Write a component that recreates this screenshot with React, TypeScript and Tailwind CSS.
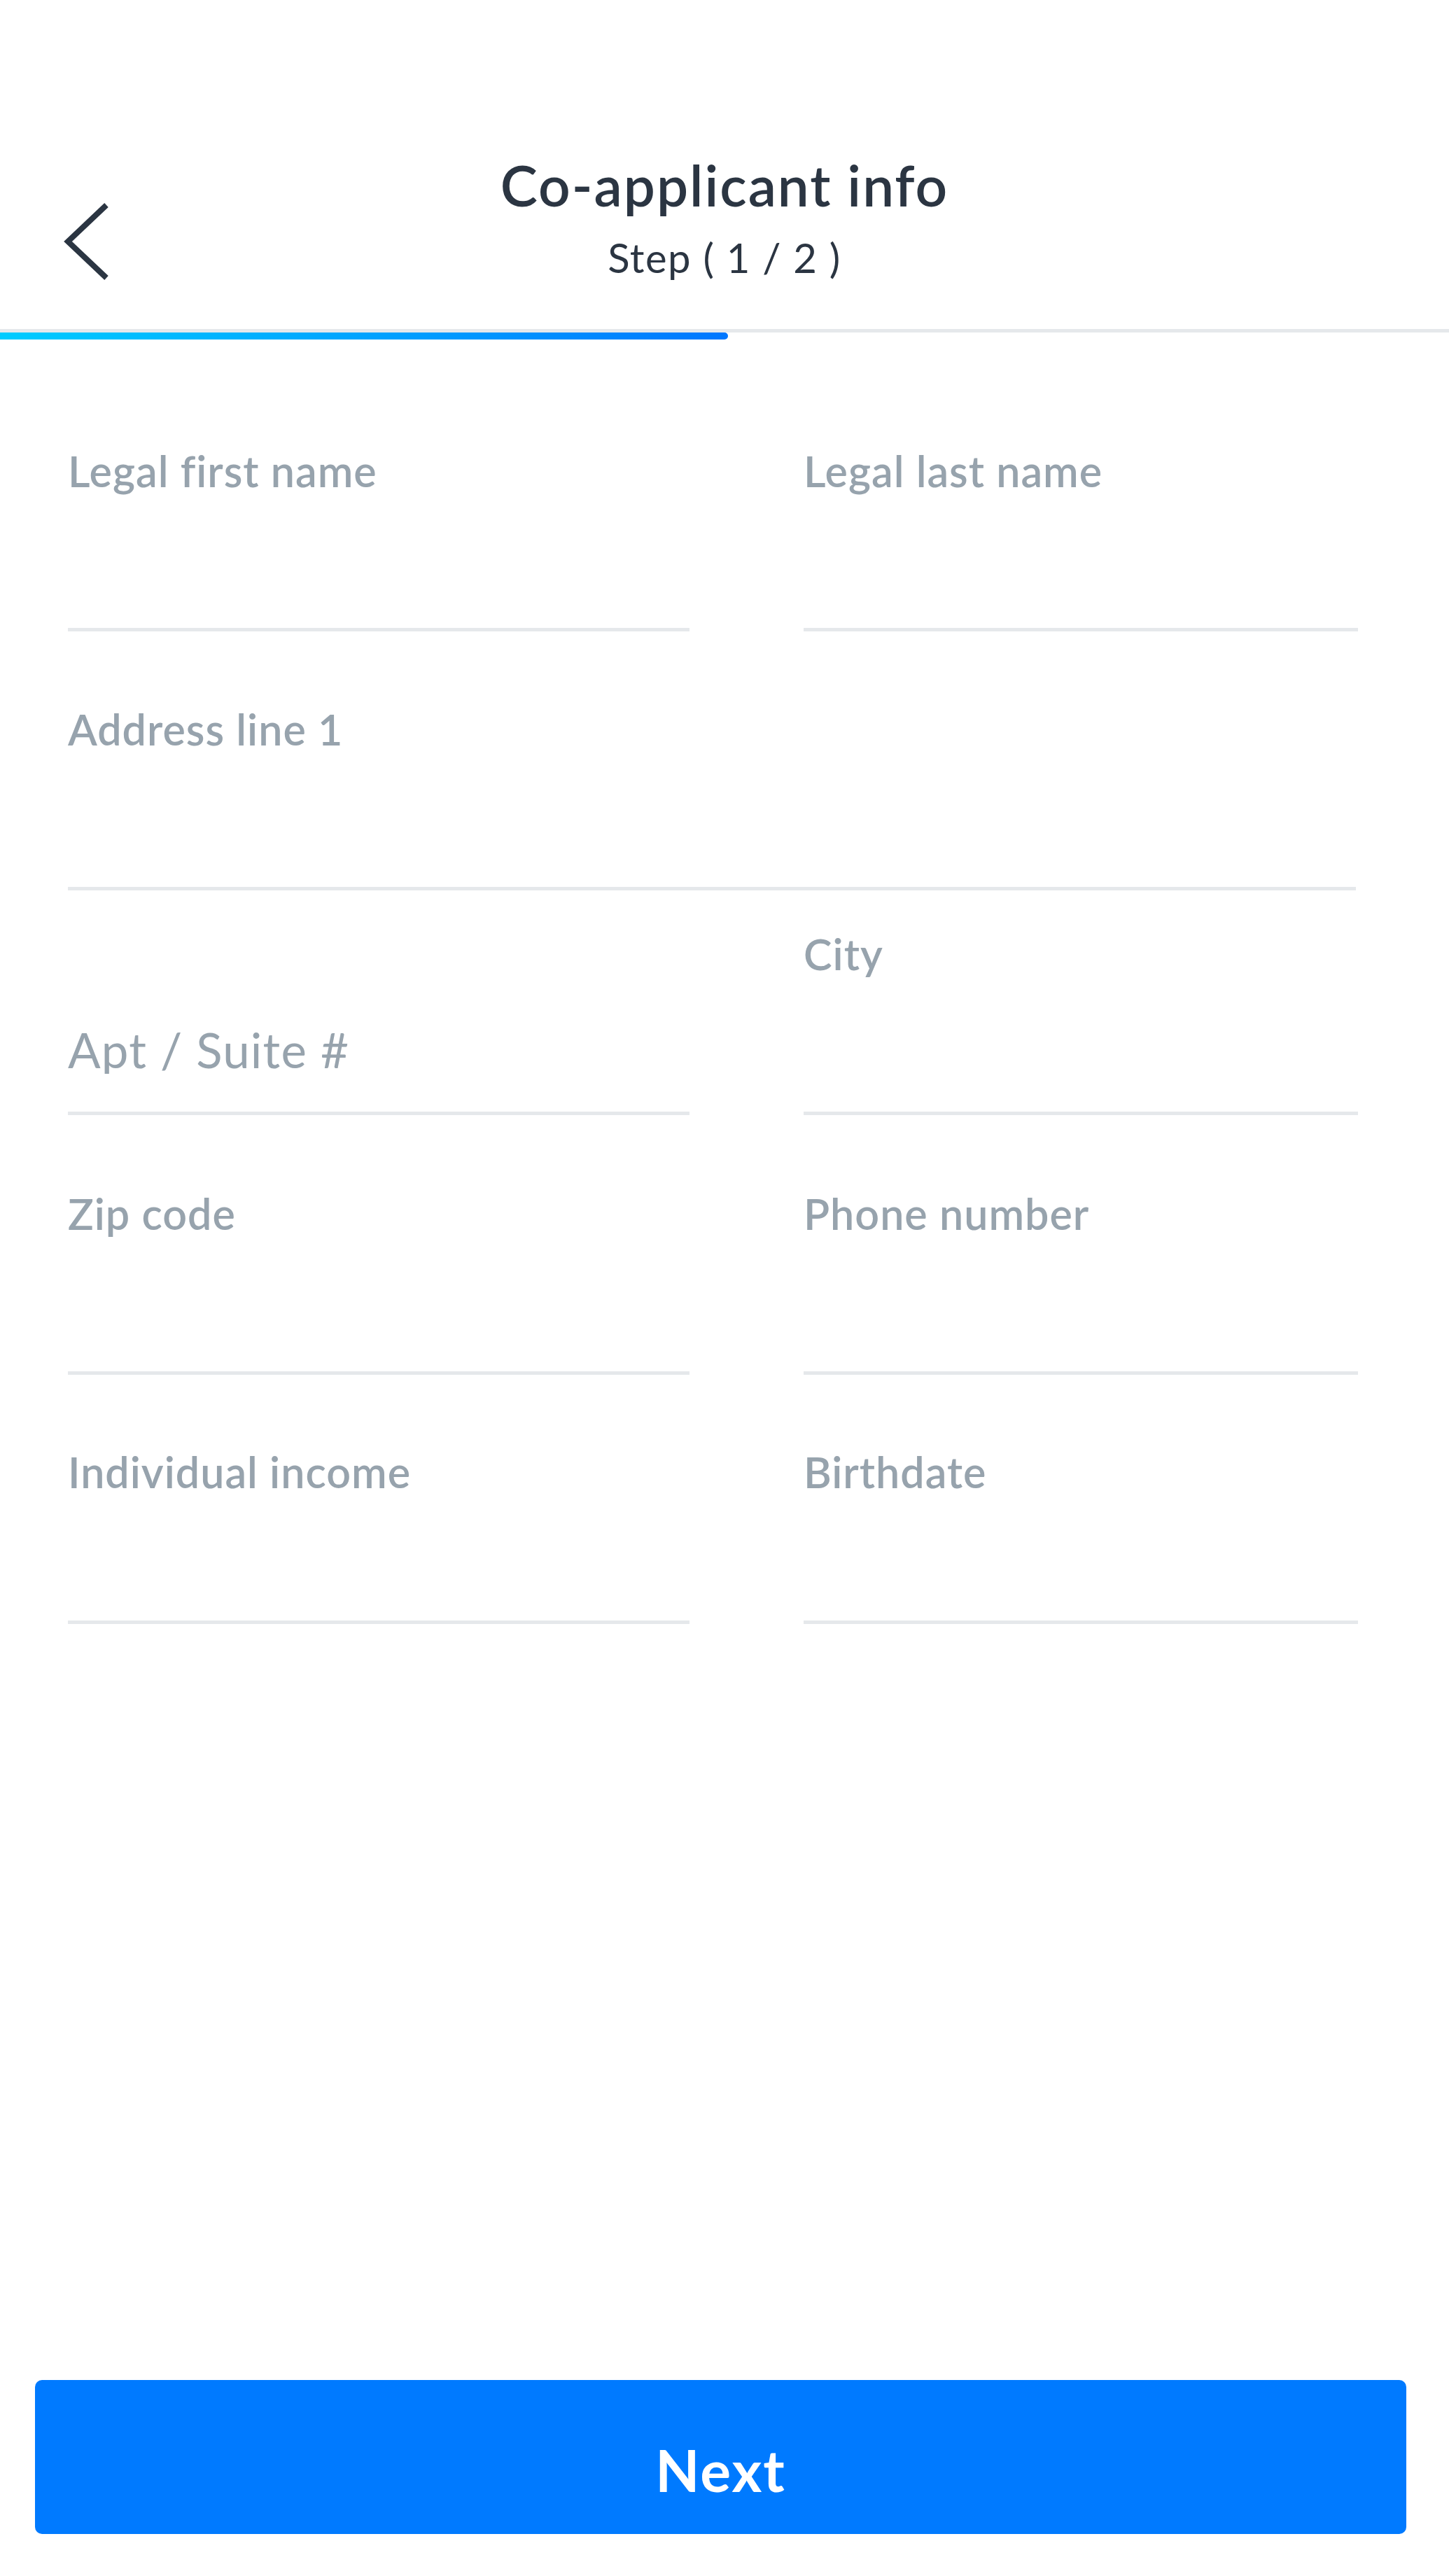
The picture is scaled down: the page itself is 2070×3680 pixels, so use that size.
import { ChangeEvent, useState } from 'react'

const LABEL = 'text-[61px] leading-none font-semibold tracking-[1px] text-[#97a3ad]'
const LINE = 'border-b-[5px] border-[#e5e8eb]'

type FieldProps = {
  label: string
  value: string
  onChange: (e: ChangeEvent<HTMLInputElement>) => void
  inner?: string
}

function Field({ label, value, onChange, inner = 'h-[194px]' }: FieldProps) {
  return (
    <div className={LINE}>
      <label className={`block ${LABEL}`}>{label}</label>
      <div className={`${inner} flex items-end pb-[40px]`}>
        <input
          type="text"
          value={value}
          onChange={onChange}
          className="w-full bg-transparent outline-none text-[61px] leading-none text-[#2b3542]"
        />
      </div>
    </div>
  )
}

export default function App() {
  const [form, setForm] = useState({
    firstName: '',
    lastName: '',
    address1: '',
    apt: '',
    city: '',
    zip: '',
    phone: '',
    income: '',
    birthdate: ''
  })

  const set = (key: keyof typeof form) => (e: ChangeEvent<HTMLInputElement>) =>
    setForm({ ...form, [key]: e.target.value })

  return (
    <div className="w-[2070px] h-[3680px] bg-white flex flex-col font-['Lato','Noto_Sans',sans-serif]">
      <header className="h-[470px] grid grid-cols-[1fr_auto_1fr]">
        <div className="pl-[80px] pt-[280px]">
          <button className="block" aria-label="Back">
            <svg width="90" height="130" viewBox="0 0 90 130" fill="none">
              <path d="M72 13 L17 65 L72 117" stroke="#2b3542" strokeWidth="8" />
            </svg>
          </button>
        </div>
        <div className="pt-[224px] flex flex-col items-center">
          <h1 className="text-[80px] leading-none font-semibold tracking-[2px] text-[#2b3542]">Co-applicant info</h1>
          <p className="mt-[35px] text-[58px] leading-none tracking-[1.5px] text-[#2b3542]">Step ( 1 / 2 )</p>
        </div>
        <div />
      </header>

      <div className="h-[5px] bg-[#e5e8eb]" />
      <div className="h-[10px] w-[1040px] rounded-r-full bg-gradient-to-r from-[#00ccff] to-[#0077ff]" />

      <div className="pl-[97px] pt-[157px] flex flex-col">
        <div className="grid grid-cols-[888px_792px] gap-x-[163px]">
          <Field label="Legal first name" value={form.firstName} onChange={set('firstName')} />
          <Field label="Legal last name" value={form.lastName} onChange={set('lastName')} />
        </div>

        <div className="mt-[109px] w-[1840px]">
          <Field label="Address line 1" value={form.address1} onChange={set('address1')} inner="h-[195px]" />
        </div>

        <div className="mt-[60px] grid grid-cols-[888px_792px] gap-x-[163px]">
          <div className={`${LINE} flex flex-col justify-end pb-[54px]`}>
            <input
              type="text"
              value={form.apt}
              onChange={set('apt')}
              placeholder="Apt / Suite #"
              className="w-full h-[69px] bg-transparent outline-none text-[69px] leading-none tracking-[1.2px] text-[#2b3542] placeholder:text-[#97a3ad]"
            />
          </div>
          <Field label="City" value={form.city} onChange={set('city')} inner="h-[195px]" />
        </div>

        <div className="mt-[110px] grid grid-cols-[888px_792px] gap-x-[163px]">
          <Field label="Zip code" value={form.zip} onChange={set('zip')} inner="h-[195px]" />
          <Field label="Phone number" value={form.phone} onChange={set('phone')} inner="h-[195px]" />
        </div>

        <div className="mt-[108px] grid grid-cols-[888px_792px] gap-x-[163px]">
          <Field label="Individual income" value={form.income} onChange={set('income')} inner="h-[182px]" />
          <Field label="Birthdate" value={form.birthdate} onChange={set('birthdate')} inner="h-[182px]" />
        </div>
      </div>

      <div className="flex-1" />

      <button className="ml-[50px] mb-[60px] w-[1959px] h-[220px] rounded-[10px] bg-[#007aff] flex justify-center pt-[87px]">
        <span className="text-[82px] leading-none font-bold tracking-[2px] text-white">Next</span>
      </button>
    </div>
  )
}
